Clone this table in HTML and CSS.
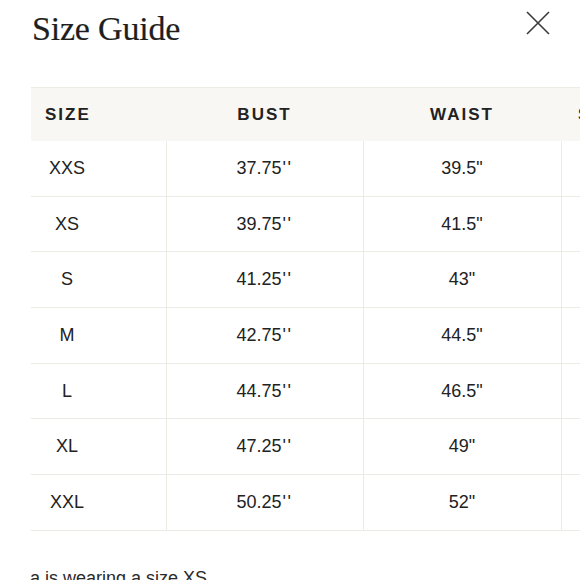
FILE: index.html
```html
<!DOCTYPE html>
<html lang="en">
<head>
<meta charset="utf-8">
<title>Size Guide</title>
<link rel="stylesheet" href="styles.css">
</head>
<body>
<div class="modal">
  <header class="top">
    <h1 class="title">Size Guide</h1>
    <button class="close" aria-label="Close">
      <svg width="24" height="24" viewBox="0 0 24 24"><path d="M1 1L23 23M23 1L1 23" stroke="#3a3a3a" stroke-width="1.6" fill="none"/></svg>
    </button>
  </header>
  <div class="table-wrap">
    <table class="sizes">
      <colgroup><col class="c1"><col class="c2"><col class="c3"><col class="c4"></colgroup>
      <thead>
        <tr><th class="first">SIZE</th><th>BUST</th><th>WAIST</th><th class="last">SHOULDER</th></tr>
      </thead>
      <tbody>
        <tr><td class="first"><span class="sz">XXS</span></td><td>37.75<span class="q">''</span></td><td>39.5"</td><td></td></tr>
        <tr><td class="first"><span class="sz">XS</span></td><td>39.75<span class="q">''</span></td><td>41.5"</td><td></td></tr>
        <tr><td class="first"><span class="sz">S</span></td><td>41.25<span class="q">''</span></td><td>43"</td><td></td></tr>
        <tr><td class="first"><span class="sz">M</span></td><td>42.75<span class="q">''</span></td><td>44.5"</td><td></td></tr>
        <tr><td class="first"><span class="sz">L</span></td><td>44.75<span class="q">''</span></td><td>46.5"</td><td></td></tr>
        <tr><td class="first"><span class="sz">XL</span></td><td>47.25<span class="q">''</span></td><td>49"</td><td></td></tr>
        <tr><td class="first"><span class="sz">XXL</span></td><td>50.25<span class="q">''</span></td><td>52"</td><td></td></tr>
      </tbody>
    </table>
  </div>
  <p class="note">a is wearing a size XS</p>
</div>
</body>
</html>
```
FILE: styles.css
```css
html, body {
  margin: 0;
  padding: 0;
  background: #ffffff;
  overflow: hidden;
  width: 580px;
  height: 580px;
}
.modal {
  width: 580px;
  height: 580px;
  overflow: hidden;
  font-family: "Liberation Sans", Arial, sans-serif;
  color: #222;
}
.top {
  height: 87px;
  display: flex;
  justify-content: space-between;
  align-items: flex-start;
  padding: 0 30px 0 32px;
  box-sizing: border-box;
}
.title {
  margin: 0;
  padding-top: 10px;
  font-family: "Liberation Serif", "Times New Roman", serif;
  font-weight: 400;
  font-size: 34px;
  letter-spacing: -0.2px;
  line-height: 38px;
  color: #1e1e1e;
  -webkit-text-stroke: 0.2px #1e1e1e;
}
.close {
  margin-top: 11px;
  padding: 0;
  border: 0;
  background: none;
  width: 24px;
  height: 24px;
  display: block;
}
.close svg { display: block; }
.table-wrap {
  padding-left: 31px;
  width: 800px;
}
.sizes {
  border-collapse: collapse;
  table-layout: fixed;
  width: 728px;
}
.c1 { width: 135px; }
.c2 { width: 197px; }
.c3 { width: 198px; }
.c4 { width: 198px; }
.sizes thead tr {
  background: #f8f7f3;
  border-top: 1px solid #ecebe6;
}
.sizes th {
  height: 53px;
  padding: 0;
  font-size: 17px;
  font-weight: 700;
  letter-spacing: 2px;
  color: #222;
  text-align: center;
  vertical-align: middle;
  white-space: nowrap;
}
.sizes th.first,
.sizes td.first {
  text-align: left;
  padding-left: 14px;
}
.sizes th.last {
  text-align: left;
  padding-left: 17px;
}
.sizes td {
  height: 54.7px;
  padding: 0;
  font-size: 18px;
  color: #222;
  text-align: center;
  vertical-align: middle;
  border-bottom: 1px solid #ecebe6;
  border-left: 1px solid #ecebe6;
}
.sizes td.first {
  border-left: 0;
}
.q {
  letter-spacing: 1.5px;
  margin-left: 1px;
}
.sz {
  display: inline-block;
  width: 44px;
  text-align: center;
}
.note {
  margin: 37px 0 0 0;
  padding-left: 30px;
  font-size: 18px;
  color: #2a2a2a;
  white-space: nowrap;
}
```
